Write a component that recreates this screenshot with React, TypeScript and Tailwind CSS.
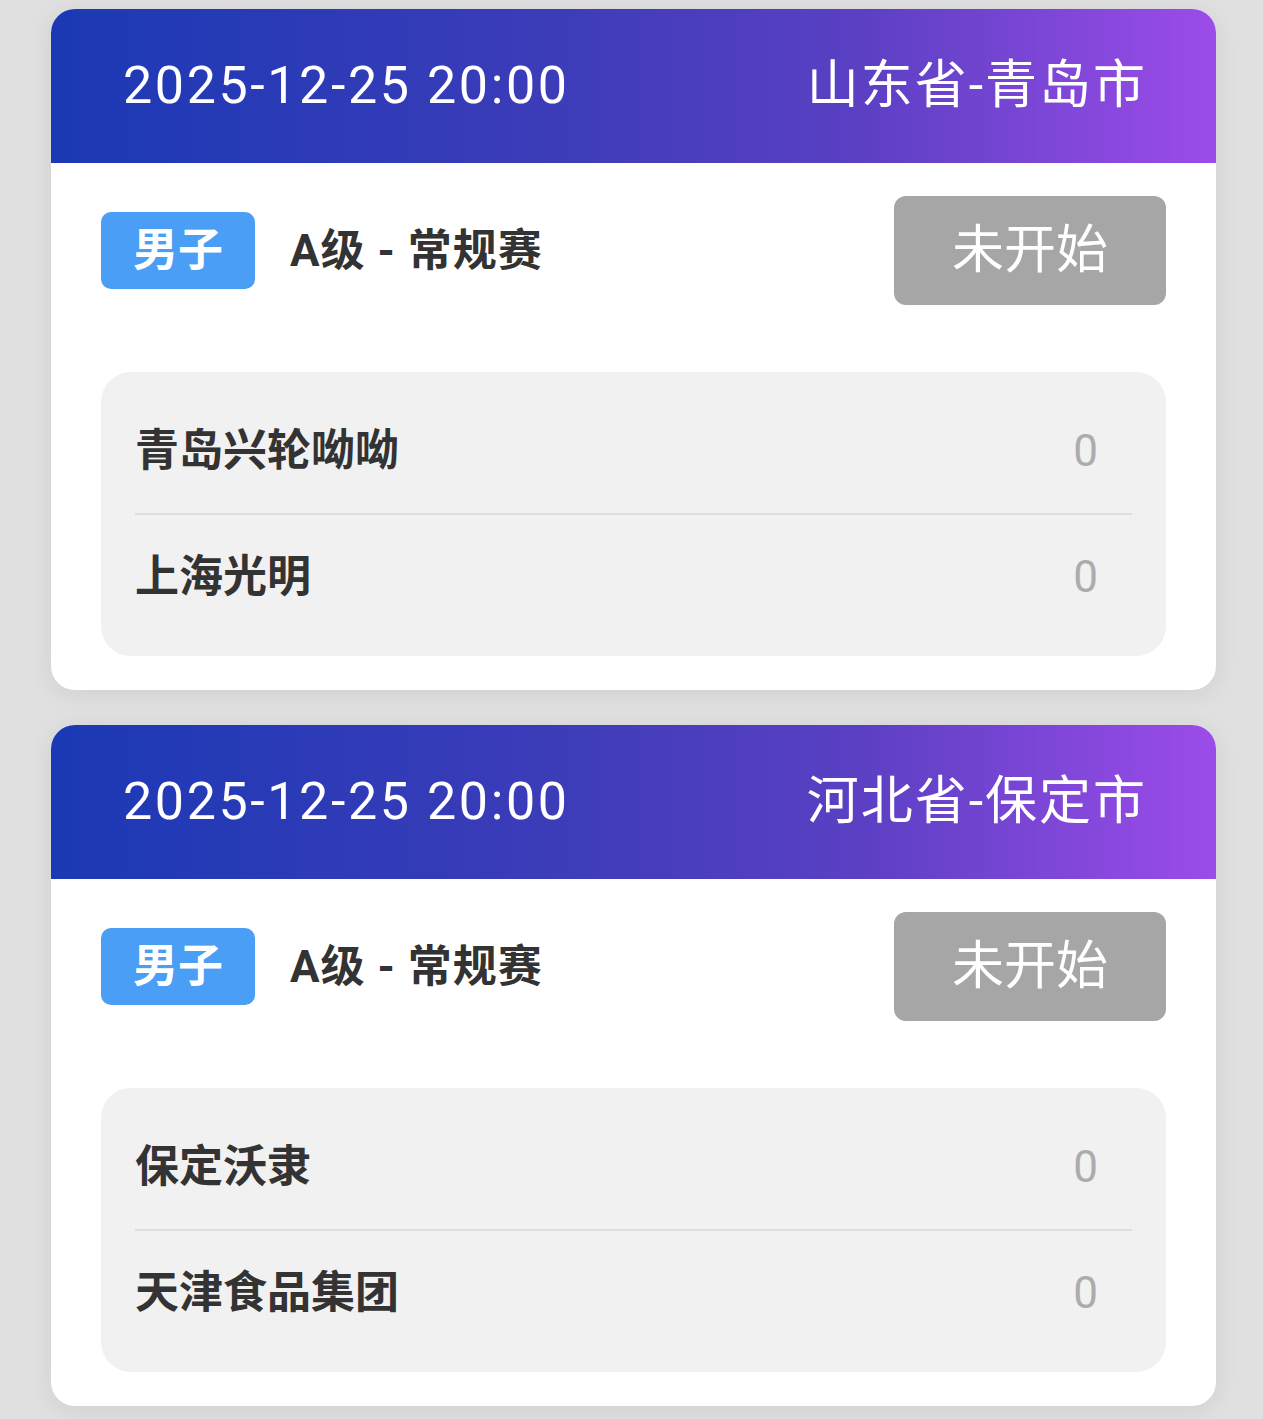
import React from 'react';

type Match = {
  time: string;
  place: string;
  gender: string;
  level: string;
  status: string;
  home: { name: string; score: number };
  away: { name: string; score: number };
};

const matches: Match[] = [
  {
    time: '2025-12-25 20:00',
    place: '山东省-青岛市',
    gender: '男子',
    level: 'A级 - 常规赛',
    status: '未开始',
    home: { name: '青岛兴轮呦呦', score: 0 },
    away: { name: '上海光明', score: 0 },
  },
  {
    time: '2025-12-25 20:00',
    place: '河北省-保定市',
    gender: '男子',
    level: 'A级 - 常规赛',
    status: '未开始',
    home: { name: '保定沃隶', score: 0 },
    away: { name: '天津食品集团', score: 0 },
  },
];

const TeamRow: React.FC<{ name: string; score: number }> = ({ name, score }) => (
  <div className="h-[124px] flex items-center justify-between pr-[34px]">
    <span className="text-[44px] font-bold text-[#333333] leading-none">{name}</span>
    <span className="text-[44px] text-[#acacac] leading-none">{score}</span>
  </div>
);

const MatchCard: React.FC<{ match: Match }> = ({ match }) => (
  <div className="bg-white rounded-[24px] overflow-hidden shadow-[0_4px_24px_rgba(0,0,0,0.08)]">
    <div className="h-[154px] flex items-center justify-between pl-[72px] pr-[69px] bg-[linear-gradient(90deg,#1b39b4_0%,#3d3cb9_44%,#5c40c4_70%,#9c4ce9_100%)] text-white text-[52px] leading-none">
      <span className="tracking-[2.6px]">{match.time}</span>
      <span className="tracking-[2px]">{match.place}</span>
    </div>

    <div className="px-[50px] pt-[33px] pb-[34px]">
      <div className="flex items-center justify-between">
        <div className="flex items-center gap-[35px]">
          <span className="w-[154px] h-[77px] rounded-[10px] bg-[#4a9ef5] text-white text-[45px] font-bold flex items-center justify-center leading-none">
            {match.gender}
          </span>
          <span className="text-[44px] font-bold text-[#333333] leading-none tracking-[1px]">{match.level}</span>
        </div>
        <span className="w-[272px] h-[109px] rounded-[12px] bg-[#a6a6a6] text-white text-[52px] flex items-center justify-center leading-none">
          {match.status}
        </span>
      </div>

      <div className="mt-[67px] bg-[#f1f1f1] rounded-[30px] px-[34px] py-[17px]">
        <TeamRow name={match.home.name} score={match.home.score} />
        <div className="h-[2px] bg-[#dedede]" />
        <TeamRow name={match.away.name} score={match.away.score} />
      </div>
    </div>
  </div>
);

export default function App() {
  return (
    <div
      className="min-h-[1419px] bg-[#e0e0e0] pl-[51px] pr-[47px] pt-[9px] pb-[13px] flex flex-col gap-[35px]"
      style={{ fontFamily: 'Roboto, "Noto Sans CJK SC", sans-serif' }}
    >
      {matches.map((m, i) => (
        <MatchCard key={i} match={m} />
      ))}
    </div>
  );
}
